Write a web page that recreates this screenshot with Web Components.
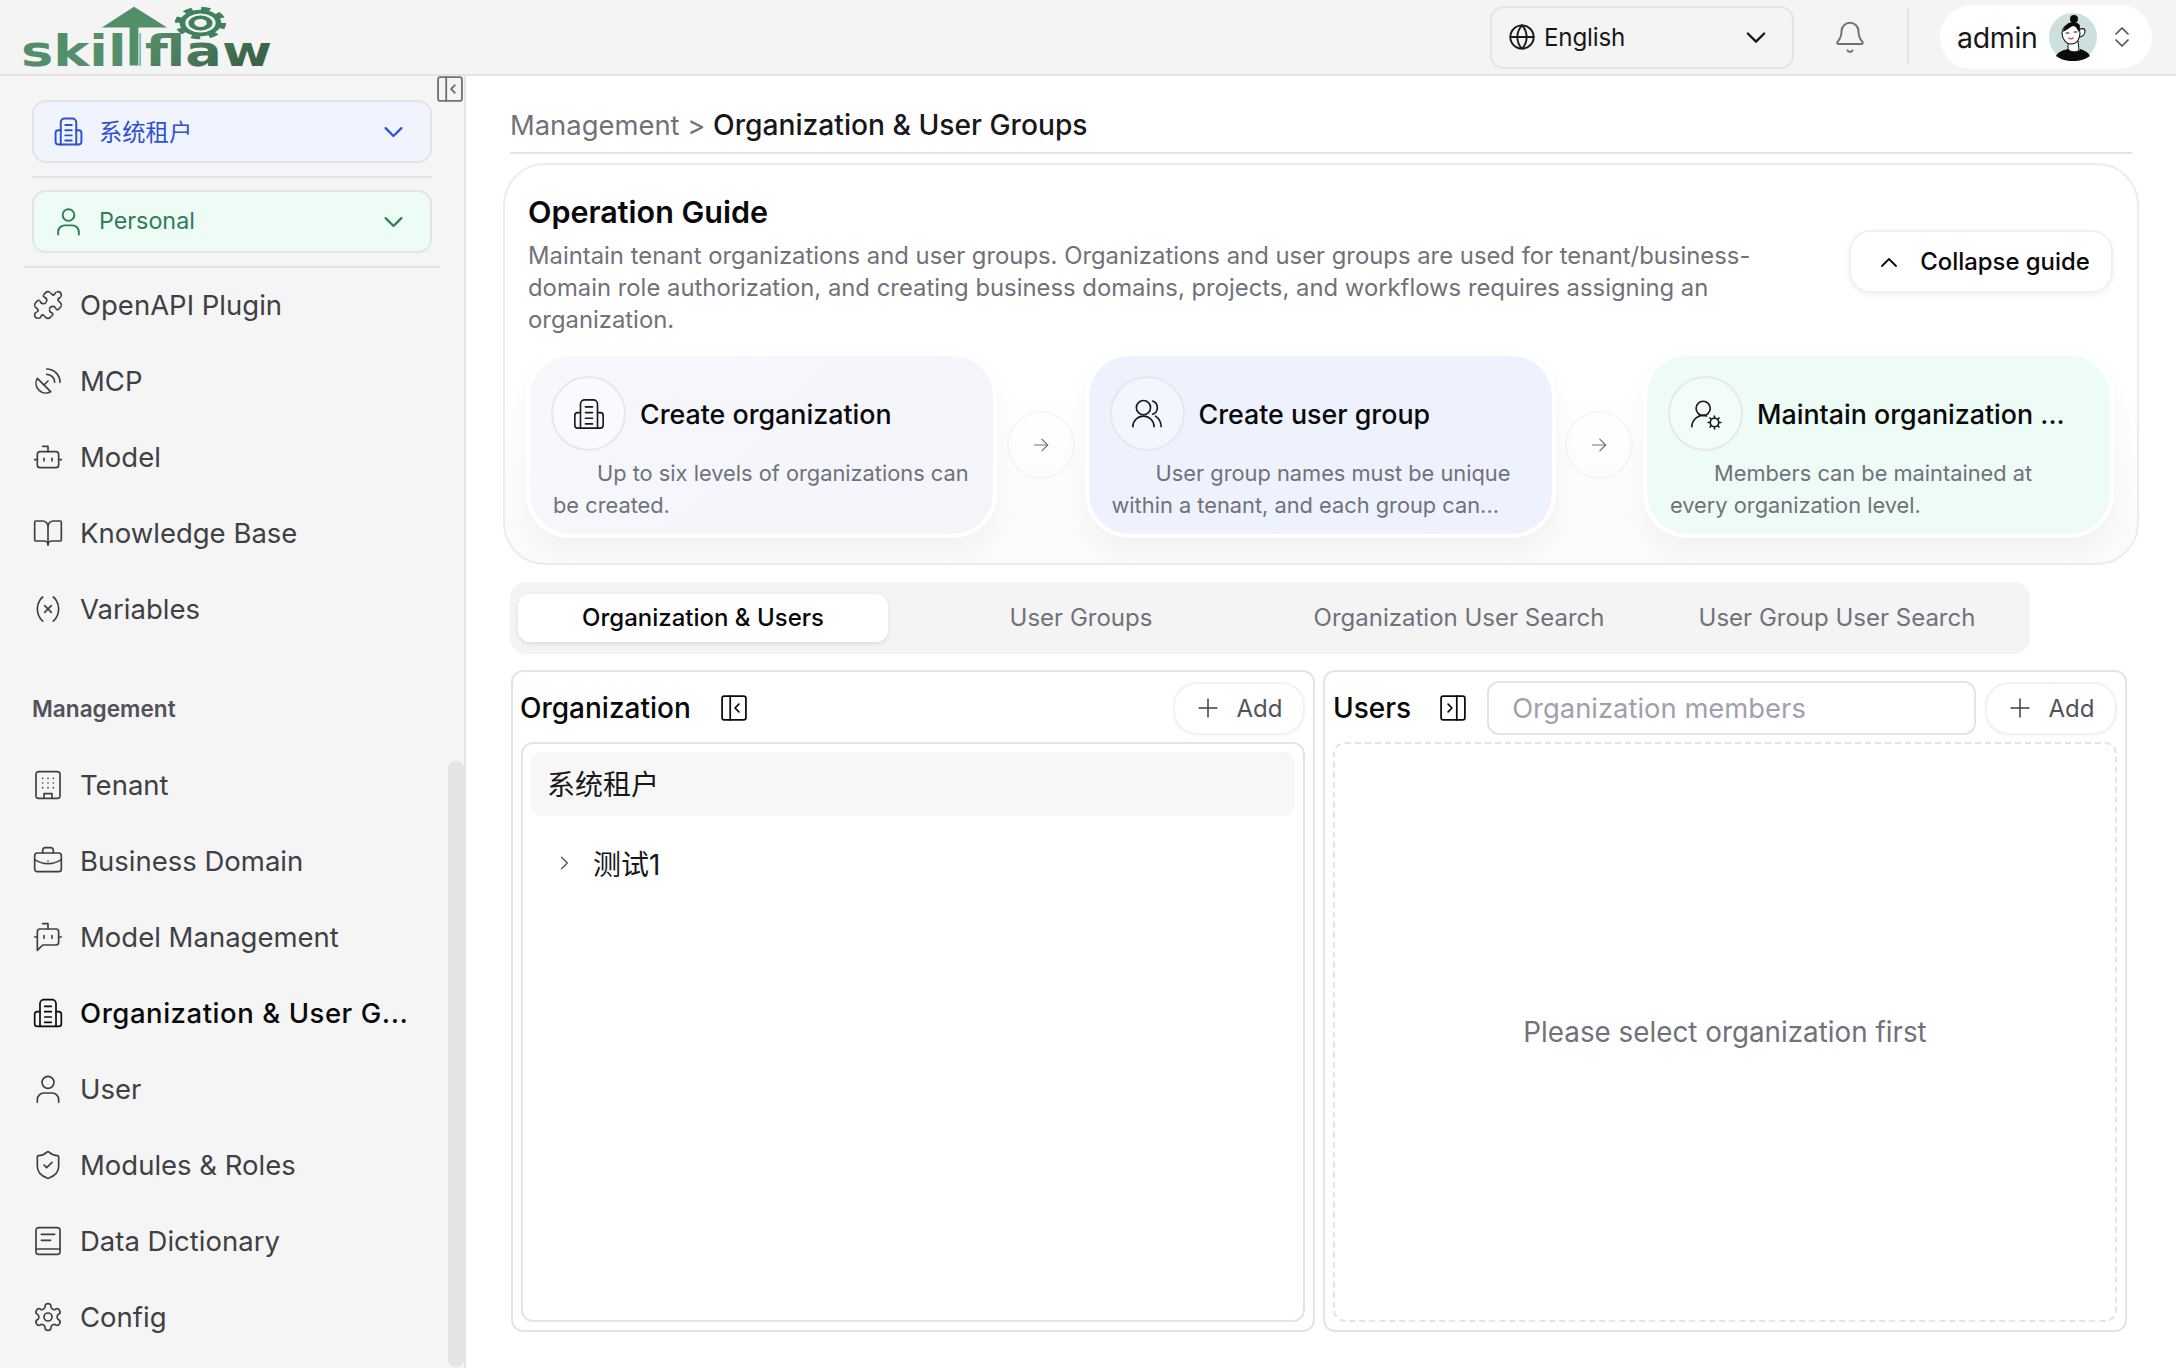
<!DOCTYPE html>
<html lang="en">
<head>
<meta charset="utf-8">
<title>Organization & User Groups</title>
<style>
  html, body { margin: 0; height: 100%; background: #fff; overflow: hidden; }
  body { font-family: Inter, "Noto Sans CJK SC", sans-serif; color: #18181b; }
</style>
</head>
<body>
<app-shell>
  <top-bar slot="top"></top-bar>
  <side-bar slot="side">
    <side-select tone="blue" icon="org">系统租户</side-select>
    <side-select tone="green" icon="user">Personal</side-select>
    <nav-item icon="puzzle">OpenAPI Plugin</nav-item>
    <nav-item icon="dish">MCP</nav-item>
    <nav-item icon="bot">Model</nav-item>
    <nav-item icon="book">Knowledge Base</nav-item>
    <nav-item icon="variable">Variables</nav-item>
    <nav-label>Management</nav-label>
    <nav-item icon="tenant">Tenant</nav-item>
    <nav-item icon="briefcase">Business Domain</nav-item>
    <nav-item icon="botmsg">Model Management</nav-item>
    <nav-item icon="org" active>Organization &amp; User G...</nav-item>
    <nav-item icon="user">User</nav-item>
    <nav-item icon="shield">Modules &amp; Roles</nav-item>
    <nav-item icon="dict">Data Dictionary</nav-item>
    <nav-item icon="gear">Config</nav-item>
  </side-bar>
  <page-crumb>
    <span slot="parent">Management &gt; </span>
    Organization &amp; User Groups
  </page-crumb>
  <guide-card>
    <guide-step tone="slate" icon="org" heading="Create organization">Up to six levels of organizations can be created.</guide-step>
    <step-arrow></step-arrow>
    <guide-step tone="blue" icon="users" heading="Create user group">User group names must be unique within a tenant, and each group can...</guide-step>
    <step-arrow></step-arrow>
    <guide-step tone="green" icon="usercog" heading="Maintain organization ...">Members can be maintained at every organization level.</guide-step>
  </guide-card>
  <tab-bar>
    <tab-item active>Organization &amp; Users</tab-item>
    <tab-item>User Groups</tab-item>
    <tab-item>Organization User Search</tab-item>
    <tab-item>User Group User Search</tab-item>
  </tab-bar>
  <split-view>
    <org-panel></org-panel>
    <users-panel></users-panel>
  </split-view>
</app-shell>

<script>
(function() {
  //=== Icons, lucide style on a 24 grid
  const ICONS = {
    puzzle: '<path d="M19.44 7.85c-.05.32.06.65.29.88l1.57 1.57c.47.47.7 1.09.7 1.7s-.23 1.23-.7 1.7l-1.61 1.61a.98.98 0 0 1-.84.28c-.47-.07-.8-.48-.97-.93a2.5 2.5 0 1 0-3.21 3.22c.44.16.85.49.92.96a.98.98 0 0 1-.27.84l-1.61 1.61a2.4 2.4 0 0 1-1.71.71 2.4 2.4 0 0 1-1.7-.71l-1.57-1.57a1.03 1.03 0 0 0-.88-.29c-.49.07-.84.5-1.02.97a2.5 2.5 0 1 1-3.24-3.24c.47-.18.9-.53.97-1.02a1.03 1.03 0 0 0-.29-.88l-1.57-1.57A2.4 2.4 0 0 1 2 12c0-.62.24-1.23.7-1.7l1.53-1.53c.24-.24.58-.35.92-.3.51.08.88.53 1.07 1.01a2.5 2.5 0 1 0 3.26-3.26c-.48-.2-.93-.56-1.01-1.07-.05-.34.06-.68.3-.92L10.3 2.7A2.4 2.4 0 0 1 12 2c.62 0 1.23.24 1.7.7l1.57 1.57c.23.23.56.34.88.29.49-.07.84-.5 1.02-.97a2.5 2.5 0 1 1 3.24 3.24c-.47.18-.9.53-.97 1.02Z" stroke-dasharray="5 1.2"/>',
    dish: '<path d="M4 10a7.31 7.31 0 0 0 10 10Z"/><path d="m9 15 3-3"/><path d="M17 13a6 6 0 0 0-6-6"/><path d="M21 13A10 10 0 0 0 11 3"/>',
    bot: '<path d="M12 8V4H8"/><rect width="16" height="12" x="4" y="8" rx="2"/><path d="M2 14h2"/><path d="M20 14h2"/><path d="M15 13v2"/><path d="M9 13v2"/>',
    book: '<path d="M12 7v14"/><path d="M3 18a1 1 0 0 1-1-1V4a1 1 0 0 1 1-1h5a4 4 0 0 1 4 4 4 4 0 0 1 4-4h5a1 1 0 0 1 1 1v13a1 1 0 0 1-1 1h-6a3 3 0 0 0-3 3 3 3 0 0 0-3-3z"/>',
    variable: '<path d="M8 21s-4-3-4-9 4-9 4-9"/><path d="M16 3s4 3 4 9-4 9-4 9"/><path d="m14.5 9.5-5 5"/><path d="m9.5 9.5 5 5"/>',
    tenant: '<rect x="3" y="2" width="18" height="20" rx="2"/><path d="M9 22v-3.5h6V22"/><path d="M8 7h.01M12 7h.01M16 7h.01M8 10.5h.01M12 10.5h.01M16 10.5h.01M8 14h.01M12 14h.01M16 14h.01"/>',
    briefcase: '<path d="M12 12h.01"/><path d="M16 6V4a2 2 0 0 0-2-2h-4a2 2 0 0 0-2 2v2"/><path d="M22 11a18.15 18.15 0 0 1-20 0"/><rect width="20" height="14" x="2" y="6" rx="2"/>',
    botmsg: '<path d="M12 6V2H8"/><path d="m8 18-4 4V8a2 2 0 0 1 2-2h12a2 2 0 0 1 2 2v8a2 2 0 0 1-2 2Z"/><path d="M2 12h2"/><path d="M9 11v2"/><path d="M15 11v2"/><path d="M20 12h2"/>',
    org: '<path d="M6 22V5a3 3 0 0 1 3-3h6a3 3 0 0 1 3 3v17"/><path d="M6 11H4a2 2 0 0 0-2 2v7a2 2 0 0 0 2 2h16a2 2 0 0 0 2-2v-7a2 2 0 0 0-2-2h-2"/><path d="M9.5 7h5M9.5 11h5M9.5 15h5M9.5 19h5"/>',
    user: '<circle cx="12" cy="7" r="4.5"/><path d="M4 22v-2a5 5 0 0 1 5-5h6a5 5 0 0 1 5 5v2"/>',
    shield: '<path d="M20 13c0 5-3.5 7.5-7.66 8.95a1 1 0 0 1-.67-.01C7.5 20.5 4 18 4 13V6a1 1 0 0 1 1-1c2 0 4.5-1.2 6.24-2.72a1.17 1.17 0 0 1 1.52 0C14.51 3.81 17 5 19 5a1 1 0 0 1 1 1z"/><path d="m9 12 2 2 4-4"/>',
    dict: '<rect x="3" y="2" width="18" height="20" rx="2"/><path d="M3 18h18"/><path d="M7 7h10"/><path d="M7 11.5h7"/>',
    gear: '<path d="M12.22 2h-.44a2 2 0 0 0-2 2v.18a2 2 0 0 1-1 1.73l-.43.25a2 2 0 0 1-2 0l-.15-.08a2 2 0 0 0-2.73.73l-.22.38a2 2 0 0 0 .73 2.73l.15.1a2 2 0 0 1 1 1.72v.51a2 2 0 0 1-1 1.74l-.15.09a2 2 0 0 0-.73 2.73l.22.38a2 2 0 0 0 2.73.73l.15-.08a2 2 0 0 1 2 0l.43.25a2 2 0 0 1 1 1.73V20a2 2 0 0 0 2 2h.44a2 2 0 0 0 2-2v-.18a2 2 0 0 1 1-1.73l.43-.25a2 2 0 0 1 2 0l.15.08a2 2 0 0 0 2.73-.73l.22-.39a2 2 0 0 0-.73-2.73l-.15-.08a2 2 0 0 1-1-1.74v-.5a2 2 0 0 1 1-1.74l.15-.09a2 2 0 0 0 .73-2.73l-.22-.38a2 2 0 0 0-2.73-.73l-.15.08a2 2 0 0 1-2 0l-.43-.25a2 2 0 0 1-1-1.73V4a2 2 0 0 0-2-2z"/><circle cx="12" cy="12" r="3"/>',
    globe: '<circle cx="12" cy="12" r="10"/><path d="M12 2a14.5 14.5 0 0 0 0 20 14.5 14.5 0 0 0 0-20"/><path d="M2 12h20"/>',
    bell: '<path d="M10.27 21.5a2 2 0 0 0 3.46 0"/><path d="M3.26 15.33A1 1 0 0 0 4 17h16a1 1 0 0 0 .74-1.67C19.41 13.96 18 12.5 18 8A6 6 0 0 0 6 8c0 4.5-1.41 5.96-2.74 7.33"/>',
    down: '<path d="m5 9 7 7 7-7"/>',
    up: '<path d="m5 16 7-7 7 7"/>',
    updown: '<path d="m6 15 6 6 6-6"/><path d="m6 9 6-6 6 6"/>',
    right: '<path d="m9 5 7 7-7 7"/>',
    arrow: '<path d="M4 12h16"/><path d="m13 5 7 7-7 7"/>',
    plus: '<path d="M3 12h18"/><path d="M12 3v18"/>',
    users: '<path d="M17 21a7.5 7.5 0 0 0-15 0"/><circle cx="9.5" cy="7.5" r="5"/><path d="M22 21c0-3.2-1.8-6-4-7.5"/><path d="M16 2.8a5 5 0 0 1 0 9.4"/>',
    usercog: '<path d="M2 21a8 8 0 0 1 10.4-7.6"/><circle cx="10" cy="8" r="5"/><circle cx="18" cy="18" r="3"/><path d="M18 13.5V15M18 21v1.5M13.5 18H15M21 18h1.5M14.8 14.8l1 1M20.2 20.2l1 1M14.8 21.2l1-1M20.2 15.8l1-1"/>',
    'panel-left': '<rect x="1" y="1" width="22" height="22" rx="2"/><path d="M8.5 1v22"/><path d="m16.5 8.5-3.5 3.5 3.5 3.5"/>',
    'panel-right': '<rect x="1" y="1" width="22" height="22" rx="2"/><path d="M15.5 1v22"/><path d="m7.5 8.5 3.5 3.5-3.5 3.5"/>'
  };

  const define = (name, css, html, setup) => {
    customElements.define(name, class extends HTMLElement {
      connectedCallback() {
        if (this.shadowRoot) return;
        const root = this.attachShadow({ mode: 'open' });
        const body = typeof html === 'function' ? html(this) : html;
        root.innerHTML = `<style>${css}</style>${body}`;
        if (setup) setup(this, root);
      }
    });
  };

  define('x-icon', `
    :host { display: inline-flex; flex: none; line-height: 0; }
    svg { fill: none; stroke: currentColor; stroke-linecap: round; stroke-linejoin: round; }
  `, el => {
    const size = el.getAttribute('size') || 28;
    const sw = el.getAttribute('sw') || 1.4;
    return `<svg width="${size}" height="${size}" viewBox="0 0 24 24" stroke-width="${sw}">${ICONS[el.getAttribute('name')] || ''}</svg>`;
  });

  define('app-shell', `
    :host { display: grid; grid-template-columns: 466px 1fr; grid-template-rows: 76px 1fr; width: 2176px; height: 1368px; overflow: hidden; }
    .top { grid-column: 1 / 3; }
    .main { padding: 0 44px 0 44px; display: flex; flex-direction: column; min-width: 0; }
  `, `
    <div class="top"><slot name="top"></slot></div>
    <slot name="side"></slot>
    <div class="main"><slot></slot></div>
  `);

  //=== Header
  define('top-bar', `
    :host { display: flex; align-items: center; height: 76px; box-sizing: border-box; background: #f4f4f4; border-bottom: 2px solid #e4e4e7; }
    .logo { display: block; flex: none; align-self: flex-start; margin-bottom: -4px; }
    .logo text { font-family: "DejaVu Sans", sans-serif; font-weight: 700; font-size: 42px; }
    .lang { margin-left: auto; width: 304px; height: 63px; box-sizing: border-box; border: 2px solid #e4e4e7; border-radius: 14px; display: flex; align-items: center; padding: 0 22px 0 16px; font-size: 24.2px; color: #18181b; }
    .lang span { margin-left: 8px; flex: 1; letter-spacing: -.2px; }
    .bell { margin-left: 39px; color: #71717a; display: flex; }
    .sep { width: 2px; height: 56px; background: #e4e4e7; margin: 0 31px 0 40px; }
    .who { width: 212px; height: 64px; margin-right: 24px; box-sizing: border-box; border-radius: 32px; background: #fff; display: flex; align-items: center; padding-left: 17px; font-size: 28.5px; color: #18181b; letter-spacing: -.3px; }
    .who svg { margin-left: 11px; flex: none; }
    .who x-icon { margin-left: 13px; color: #52525b; }
  `, `
    <svg class="logo" width="290" height="78" viewBox="0 0 290 78">
      <defs><linearGradient id="lg" x1="0" x2="1" y1="0" y2="0.2"><stop offset="0" stop-color="#4f8f66"/><stop offset=".5" stop-color="#568f6c"/><stop offset="1" stop-color="#3a6648"/></linearGradient></defs>
      <text x="21" y="66" textLength="251" lengthAdjust="spacingAndGlyphs" fill="url(#lg)">skillflaw</text>
      <path d="M134 6 169 28H139V66H129V28H100Z" fill="#528f69" stroke="#f4f4f4" stroke-width="1.2"/>
      <g transform="translate(200.5 23) scale(1.58 1)">
        <circle r="14.5" fill="none" stroke="#41805c" stroke-width="3.5" stroke-dasharray="5.7 5.69"/>
        <circle r="13.2" fill="#41805c"/>
        <circle r="8.6" fill="none" stroke="#f4f4f4" stroke-width="2"/>
        <circle r="4" fill="#f4f4f4"/>
      </g>
    </svg>
    <div class="lang"><x-icon name="globe" size="28" sw="1.6"></x-icon><span>English</span><x-icon name="down" size="28" sw="2"></x-icon></div>
    <div class="bell"><x-icon name="bell" size="34" sw="1.4"></x-icon></div>
    <div class="sep"></div>
    <div class="who">admin
      <svg width="48" height="48" viewBox="0 0 48 48">
        <circle cx="24" cy="24" r="24" fill="#cde0de"/>
        <path d="M7 43c2-4 7-6 12-7l3 2c3 1 7 1 9-1v-1c4 1 8 3 10 7-4 3-10 5-17 5s-13-2-17-5Z" fill="#0b0b0b"/>
        <path d="M19 29v7c2 3 8 4 11 1l-1-9Z" fill="#fff" stroke="#111" stroke-width="1"/>
        <path d="M30 17c2-2 6-2 6 1 0 3-2 6-6 6" fill="#fff" stroke="#111" stroke-width="1.1"/>
        <path d="M13 20c0-5 4-9 10-9 5 0 8 4 8 9 0 6-3 11-9 11-5 0-9-5-9-11Z" fill="#fff" stroke="#111" stroke-width="1.1"/>
        <path d="M14 19c1-6 5-10 10-10 3 0 6 1 7 4l-1 6c-2-3-3-6-6-6-3 1-6 4-10 6Z" fill="#0b0b0b"/>
        <circle cx="25" cy="6" r="4" fill="#0b0b0b"/>
        <path d="M17 20h3M25 19h3" fill="none" stroke="#111" stroke-width="1.1" stroke-linecap="round"/>
        <path d="M20 25c1 1 3 1 4 0" fill="none" stroke="#d8434a" stroke-width="1.4" stroke-linecap="round"/>
      </svg>
      <x-icon name="updown" size="24" sw="1.7"></x-icon>
    </div>
  `);

  //=== Sidebar
  define('side-bar', `
    :host { display: block; position: relative; width: 466px; height: 1292px; box-sizing: border-box; padding-top: 24px; background: #f5f5f5; border-right: 2px solid #e4e4e7; overflow: hidden; }
    .toggle { position: absolute; left: 437px; top: 0; color: #71717a; }
    .thumb { position: absolute; left: 448px; top: 685px; bottom: 1px; width: 16px; border-radius: 8px; background: #e4e4e7; }
    ::slotted(nav-item:nth-of-type(1)) { margin-top: -1px; }
  `, `
    <slot></slot>
    <div class="toggle"><x-icon name="panel-left" size="26" sw="1.7"></x-icon></div>
    <div class="thumb"></div>
  `);

  define('side-select', `
    :host { display: block; padding: 0 32px 0 32px; margin-bottom: 12px; }
    :host([tone=green]) { margin-bottom: 0; }
    .box { height: 63px; box-sizing: border-box; border: 2px solid #e4e4e7; border-radius: 14px; display: flex; align-items: center; padding: 0 23px 0 19px; font-size: 23.3px; }
    .box.blue { background: #eff4ff; color: #2f50d6; }
    .box.green { background: #edfcf5; color: #2e7d5b; }
    span { flex: 1; margin-left: 15px; padding-bottom: 2px; }
    .rule { height: 2px; background: #e4e4e7; margin-top: 13px; }
    .green + .rule { margin: 13px -8px 0; }
  `, el => `
    <div class="box ${el.getAttribute('tone')}"><x-icon name="${el.getAttribute('icon')}" size="31" sw="1.5"></x-icon><span><slot></slot></span><x-icon name="down" size="27" sw="2"></x-icon></div>
    <div class="rule"></div>
  `);

  define('nav-item', `
    :host { display: flex; align-items: center; height: 76px; padding-left: 32px; color: #3f3f46; font-size: 27.5px; }
    :host([active]) { color: #09090b; font-weight: 500; letter-spacing: .55px; }
    span { margin-left: 16px; white-space: nowrap; }
  `, el => `<x-icon name="${el.getAttribute('icon')}" size="32" sw="1.25"></x-icon><span><slot></slot></span>`);

  define('nav-label', `
    :host { display: block; margin: 44px 0 20px 32px; height: 36px; line-height: 36px; font-size: 22.6px; font-weight: 600; color: #52525b; }
  `, `<slot></slot>`);

  //=== Page header and guide
  define('page-crumb', `
    :host { display: block; padding-top: 23px; height: 78px; box-sizing: border-box; border-bottom: 2px solid #e4e4e7; line-height: 52px; font-size: 28.2px; font-weight: 500; color: #18181b; white-space: nowrap; }
    ::slotted(span) { color: #71717a; font-weight: 400; font-size: 27.4px; }
  `, `<slot name="parent"></slot><slot></slot>`);

  define('guide-card', `
    :host { display: block; margin: 9px -7px 17px -7px; box-sizing: border-box; height: 402px; padding: 27px 23px 23px 23px; border: 2px solid #ececee; border-radius: 42px; background: linear-gradient(#fff 55%, #fafafa); }
    .head { display: flex; align-items: flex-start; justify-content: space-between; }
    h2 { margin: 0; font-size: 30.5px; line-height: 40px; font-weight: 600; color: #09090b; }
    p { margin: 8px 0 16px; width: 1240px; font-size: 23.85px; line-height: 32px; color: #71717a; }
    button { margin-top: 38px; margin-right: 1px; width: 264px; height: 63px; flex: none; display: flex; align-items: center; justify-content: center; gap: 19px; padding: 0 0 0 5px; border: 2px solid #f0f0f1; border-radius: 22px; background: #fff; box-shadow: 0 2px 6px rgba(0,0,0,.06); font: 500 23.9px Inter, sans-serif; color: #09090b; }
    .steps { display: flex; align-items: stretch; margin-left: -2px; }
  `, `
    <div class="head">
      <div>
        <h2>Operation Guide</h2>
        <p>Maintain tenant organizations and user groups. Organizations and user groups are used for tenant/business-domain role authorization, and creating business domains, projects, and workflows requires assigning an organization.</p>
      </div>
      <button><x-icon name="up" size="24" sw="1.8"></x-icon>Collapse guide</button>
    </div>
    <div class="steps"><slot></slot></div>
  `);

  define('guide-step', `
    :host { display: block; width: 471px; height: 186px; box-sizing: border-box; flex: none; padding: 20px 21px 12px; border: 4px solid rgba(255,255,255,.85); border-radius: 44px; background-clip: padding-box !important; box-shadow: 0 12px 26px rgba(0,0,0,.04); }
    :host([tone=slate]) { background: linear-gradient(135deg, #f7f8fc, #f3f5fb); }
    :host([tone=blue]) { background: #eef2ff; }
    :host([tone=green]) { background: #edfcf5; }
    .head { display: flex; align-items: center; gap: 14px; }
    .ic { width: 75px; height: 75px; box-sizing: border-box; border: 2px solid #e7e8ec; border-radius: 50%; display: flex; align-items: center; justify-content: center; flex: none; color: #18181b; background: rgba(255,255,255,.35); }
    h3 { margin: 0; font-size: 26.8px; font-weight: 500; color: #09090b; white-space: nowrap; }
    p { margin: 6px 0 0; padding-left: 2px; text-indent: 44px; font-size: 21.8px; line-height: 32px; color: #71717a; }
  `, el => `
    <div class="head"><div class="ic"><x-icon name="${el.getAttribute('icon')}" size="34" sw="1.15"></x-icon></div><h3>${el.getAttribute('heading')}</h3></div>
    <p><slot></slot></p>
  `);

  define('step-arrow', `
    :host { flex: 1; display: flex; align-items: center; justify-content: center; }
    div { width: 68px; height: 68px; box-sizing: border-box; border: 2px solid rgba(240,240,242,.6); border-radius: 50%; display: flex; align-items: center; justify-content: center; color: #71717a; }
  `, `<div><x-icon name="arrow" size="20" sw="1.4"></x-icon></div>`);

  //=== Tabs
  define('tab-bar', `
    :host { display: grid; grid-template-columns: repeat(4, 370px); gap: 8px; width: 1520px; height: 72px; box-sizing: border-box; padding: 12px 8px; background: #f4f4f5; border-radius: 16px; margin-bottom: 16px; flex: none; }
  `, `<slot></slot>`);

  define('tab-item', `
    :host { display: flex; align-items: center; justify-content: center; border-radius: 12px; font-size: 24px; color: #71717a; white-space: nowrap; padding-bottom: 2px; box-sizing: border-box; }
    :host([active]) { background: #fff; color: #09090b; font-weight: 500; box-shadow: 0 2px 5px rgba(0,0,0,.1); }
  `, `<slot></slot>`);

  //=== Panels
  define('split-view', `
    :host { display: grid; grid-template-columns: 804px 804px; gap: 8px; margin-left: 1px; height: 662px; }
  `, `<slot></slot>`);

  define('add-button', `
    :host { display: flex; align-items: center; justify-content: center; gap: 17px; width: 132px; height: 53px; box-sizing: border-box; flex: none; border: 2px solid #f2f2f3; border-radius: 24px; background: #fff; box-shadow: 0 1px 3px rgba(0,0,0,.04); font-size: 24px; color: #52525b; }
    x-icon { color: #3f3f46; }
  `, `<x-icon name="plus" size="24" sw="1.5"></x-icon>Add`);

  const panelCss = `
    :host { display: flex; flex-direction: column; box-sizing: border-box; padding: 9px 8px 8px; border: 2px solid #e4e4e7; border-radius: 12px; min-width: 0; }
    .head { display: flex; align-items: center; height: 54px; margin-bottom: 7px; flex: none; }
    .title { font-size: 28px; font-weight: 500; color: #09090b; }
    x-icon.p { color: #09090b; }
  `;

  define('org-panel', panelCss + `
    .title { margin-left: -1px; }
    .head x-icon.p { margin-left: 30px; }
    add-button { margin-left: auto; }
    .tree { flex: 1; box-sizing: border-box; padding: 8px; border: 2px solid #e4e4e7; border-radius: 12px; }
    .row { display: flex; align-items: center; height: 64px; padding-bottom: 2px; box-sizing: border-box; border-radius: 12px; font-size: 28px; color: #18181b; }
    .row.sel { background: #f7f7f7; padding-left: 16px; margin-bottom: 16px; }
    .row x-icon { margin-left: 23px; margin-right: 19px; color: #52525b; }
  `, `
    <div class="head"><span class="title">Organization</span><x-icon class="p" name="panel-left" size="26" sw="1.6"></x-icon><add-button></add-button></div>
    <div class="tree">
      <div class="row sel">系统租户</div>
      <div class="row"><x-icon name="right" size="20" sw="1.6"></x-icon>测试1</div>
    </div>
  `);

  define('users-panel', panelCss + `
    .head { gap: 9px; }
    .head x-icon.p { margin-left: 20px; margin-right: 12px; }
    .search { flex: 1; height: 54px; box-sizing: border-box; border: 2px solid #e4e4e7; border-radius: 12px; display: flex; align-items: center; padding-left: 23px; font-size: 27.4px; color: #a1a1aa; }
    .empty { flex: 1; display: flex; align-items: center; justify-content: center; border: 2px dashed #e4e4e7; border-radius: 12px; font-size: 27.8px; color: #71717a; }
  `, `
    <div class="head"><span class="title">Users</span><x-icon class="p" name="panel-right" size="26" sw="1.6"></x-icon><div class="search">Organization members</div><add-button></add-button></div>
    <div class="empty">Please select organization first</div>
  `);
})();
</script>
</body>
</html>
